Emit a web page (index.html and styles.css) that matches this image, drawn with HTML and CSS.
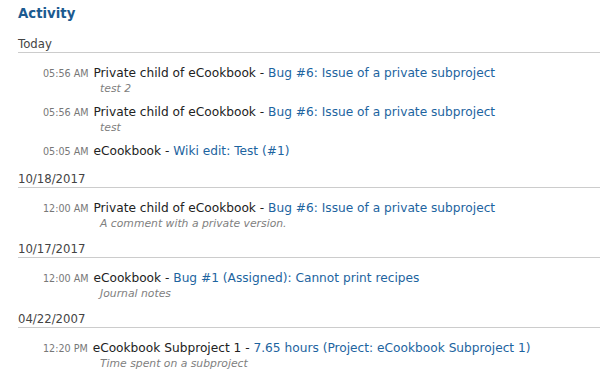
FILE: index.html
```html
<!DOCTYPE html>
<html>
<head>
<meta charset="utf-8">
<link rel="stylesheet" href="styles.css">
</head>
<body>
<div class="content">
  <h2 class="title">Activity</h2>
  <div id="activity">
    <h3 class="day">Today</h3>
    <dl class="entries">
      <dt><span class="time">05:56 AM</span> <span class="project">Private child of eCookbook</span> <a href="#">Bug #6: Issue of a private subproject</a></dt>
      <dd><span class="description">test 2</span></dd>
      <dt><span class="time">05:56 AM</span> <span class="project">Private child of eCookbook</span> <a href="#">Bug #6: Issue of a private subproject</a></dt>
      <dd><span class="description">test</span></dd>
      <dt><span class="time">05:05 AM</span> <span class="project">eCookbook</span> <a href="#">Wiki edit: Test (#1)</a></dt>
      <dd></dd>
    </dl>
    <h3 class="day">10/18/2017</h3>
    <dl class="entries">
      <dt><span class="time">12:00 AM</span> <span class="project">Private child of eCookbook</span> <a href="#">Bug #6: Issue of a private subproject</a></dt>
      <dd><span class="description">A comment with a private version.</span></dd>
    </dl>
    <h3 class="day">10/17/2017</h3>
    <dl class="entries">
      <dt><span class="time">12:00 AM</span> <span class="project">eCookbook</span> <a href="#">Bug #1 (Assigned): Cannot print recipes</a></dt>
      <dd><span class="description">Journal notes</span></dd>
    </dl>
    <h3 class="day">04/22/2007</h3>
    <dl class="entries">
      <dt><span class="time">12:20 PM</span> <span class="project">eCookbook Subproject 1</span> <a href="#">7.65 hours (Project: eCookbook Subproject 1)</a></dt>
      <dd><span class="description">Time spent on a subproject</span></dd>
    </dl>
  </div>
</div>
</body>
</html>
```
FILE: styles.css
```css
html, body {
  margin: 0;
  padding: 0;
  background: #fff;
}
body {
  font-family: "DejaVu Sans", Verdana, sans-serif;
  font-size: 12px;
  color: #222;
}
.content {
  padding: 4px 0 0 18px;
}
.title {
  margin: 0 0 12px 0;
  font-size: 13.3px;
  line-height: 20px;
  font-weight: bold;
  color: #1c5a90;
}
.day {
  margin: 11px 0 11px 0;
  font-size: 11.7px;
  line-height: 16px;
  font-weight: normal;
  color: #444;
  border-bottom: 1px solid #ccc;
}
#activity > .day:first-child {
  margin-top: 0;
}
.entries {
  margin: 0 0 0 25px;
  padding: 0;
}
.entries dt {
  margin: 0;
  line-height: 18px;
  font-size: 12.2px;
  white-space: nowrap;
}
.entries dt .time {
  color: #777;
  font-size: 9.6px;
  line-height: 1;
  margin-right: 1px;
}
.entries dt .project:after {
  content: " -";
}
.entries dt a {
  color: #1d64a0;
  text-decoration: none;
}
.entries dd {
  margin: 0 0 8px 40px;
  padding-left: 17px;
  font-size: 10.8px;
  line-height: 13px;
}
.entries dd:empty {
  margin-bottom: 8px;
}
.entries dd .description {
  display: block;
  font-style: italic;
  color: #808080;
}
```
